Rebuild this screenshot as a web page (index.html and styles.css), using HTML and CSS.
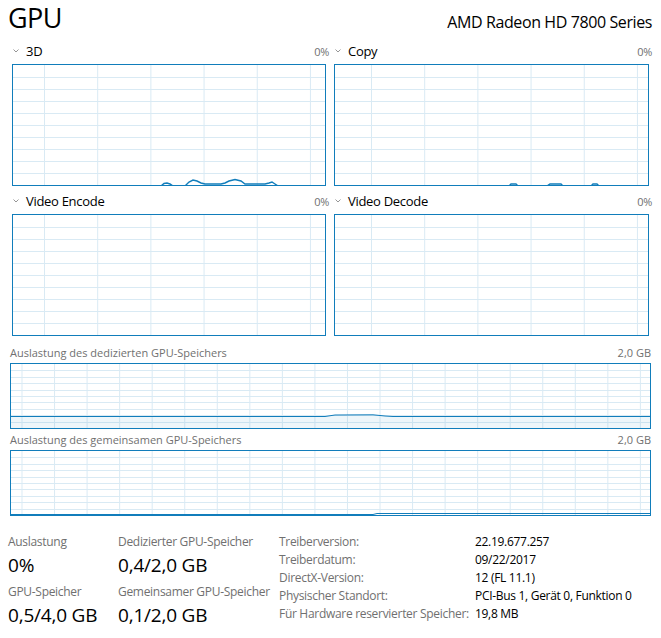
FILE: index.html
```html
<!DOCTYPE html>
<html lang="de">
<head>
<meta charset="utf-8">
<title>GPU</title>
<link rel="stylesheet" href="styles.css">
</head>
<body>
<header class="top">
  <h1 class="title">GPU</h1>
  <div class="device">AMD Radeon HD 7800 Series</div>
</header>

<section class="engines">
  <div class="engine">
    <div class="engine-head">
      <svg class="chev" viewBox="0 0 6 4"><polyline points="0.5,0.5 3,3 5.5,0.5"/></svg>
      <span class="engine-name">3D</span>
      <span class="pct">0%</span>
    </div>
    <div class="chart chart-left">
      <svg class="data" viewBox="0 0 312 120" preserveAspectRatio="none">
        <polyline points="0,121 148,121 151,118.5 154,118 157,119 160,121 172,121 176,117 180,115 184,116 188,118 192,119 200,119 208,119 212,118 216,116 222,114.5 228,116 232,119 240,119 252,119 256,118 259,117 262,119 265,121 312,121"/>
      </svg>
    </div>
  </div>
  <div class="engine">
    <div class="engine-head">
      <svg class="chev" viewBox="0 0 6 4"><polyline points="0.5,0.5 3,3 5.5,0.5"/></svg>
      <span class="engine-name">Copy</span>
      <span class="pct">0%</span>
    </div>
    <div class="chart chart-right">
      <svg class="data" viewBox="0 0 313 120" preserveAspectRatio="none">
        <polyline points="0,121 174,121 176,119 181,119 183,121 212,121 215,119 226,119 228,121 256,121 258,119 262,119 264,121 313,121"/>
      </svg>
    </div>
  </div>
  <div class="engine">
    <div class="engine-head">
      <svg class="chev" viewBox="0 0 6 4"><polyline points="0.5,0.5 3,3 5.5,0.5"/></svg>
      <span class="engine-name">Video Encode</span>
      <span class="pct">0%</span>
    </div>
    <div class="chart chart-left"></div>
  </div>
  <div class="engine">
    <div class="engine-head">
      <svg class="chev" viewBox="0 0 6 4"><polyline points="0.5,0.5 3,3 5.5,0.5"/></svg>
      <span class="engine-name">Video Decode</span>
      <span class="pct">0%</span>
    </div>
    <div class="chart chart-right"></div>
  </div>
</section>

<section class="mem">
  <div class="mem-block">
    <div class="mem-head"><span>Auslastung des dedizierten GPU-Speichers</span><span>2,0 GB</span></div>
    <div class="mchart">
      <svg class="data" viewBox="0 0 639 64" preserveAspectRatio="none">
        <polygon class="fill" points="0,52.5 314,52.5 324,51 362,50.8 374,52 382,52.5 639,52.5 639,64 0,64"/>
        <polyline class="thin" points="0,52.5 314,52.5 324,51 362,50.8 374,52 382,52.5 639,52.5"/>
      </svg>
    </div>
  </div>
  <div class="mem-block">
    <div class="mem-head"><span>Auslastung des gemeinsamen GPU-Speichers</span><span>2,0 GB</span></div>
    <div class="mchart">
      <svg class="data" viewBox="0 0 639 64" preserveAspectRatio="none">
        <polyline class="thin" points="0,63.5 362,63.5 366,62.5 639,62.5"/>
      </svg>
    </div>
  </div>
</section>

<section class="stats">
  <div class="stat-col stat-col-1">
    <div class="stat"><div class="stat-label">Auslastung</div><div class="stat-value">0%</div></div>
    <div class="stat"><div class="stat-label">GPU-Speicher</div><div class="stat-value">0,5/4,0 GB</div></div>
  </div>
  <div class="stat-col stat-col-2">
    <div class="stat"><div class="stat-label">Dedizierter GPU-Speicher</div><div class="stat-value">0,4/2,0 GB</div></div>
    <div class="stat"><div class="stat-label">Gemeinsamer GPU-Speicher</div><div class="stat-value">0,1/2,0 GB</div></div>
  </div>
  <dl class="info">
    <dt>Treiberversion:</dt><dd>22.19.677.257</dd>
    <dt>Treiberdatum:</dt><dd>09/22/2017</dd>
    <dt>DirectX-Version:</dt><dd>12 (FL 11.1)</dd>
    <dt>Physischer Standort:</dt><dd>PCI-Bus 1, Gerät 0, Funktion 0</dd>
    <dt>Für Hardware reservierter Speicher:</dt><dd>19,8 MB</dd>
  </dl>
</section>
</body>
</html>
```

FILE: styles.css
```css
html, body {
  margin: 0;
  padding: 0;
  background: #fff;
}

body {
  width: 661px;
  height: 638px;
  overflow: hidden;
  font-family: "Open Sans", "Noto Sans", sans-serif;
  color: #000;
}

.top {
  display: flex;
  justify-content: space-between;
  align-items: baseline;
  height: 41px;
  padding: 0 9px 0 8px;
  box-sizing: border-box;
}

.title {
  margin: 0;
  font-size: 27px;
  font-weight: 400;
  line-height: 36px;
  letter-spacing: -0.6px;
}

.device {
  font-size: 16px;
  line-height: 20px;
  letter-spacing: -0.4px;
}

.engines {
  display: grid;
  grid-template-columns: 314px 315px;
  column-gap: 8px;
  row-gap: 5px;
  margin-left: 12px;
}

.engine-head {
  display: flex;
  align-items: baseline;
  height: 20px;
  line-height: 20px;
  margin: 0 -3px 3px 0;
  font-size: 13px;
}

.chev {
  width: 6px;
  height: 4px;
  margin: 0 7px 0 1px;
  align-self: center;
  fill: none;
  stroke: #8a8a8a;
  stroke-width: 0.9;
}

.engine-name {
  letter-spacing: -0.3px;
}

.pct {
  margin-left: auto;
  font-size: 11px;
  color: #707070;
  letter-spacing: -0.3px;
}

.chart {
  height: 120px;
  border: 1px solid #117dbb;
  background-color: #fff;
  background-image:
    linear-gradient(to right, #d9eaf4 1px, transparent 1px),
    repeating-linear-gradient(to bottom, transparent 0, transparent 11px, #d9eaf4 11px, #d9eaf4 12px);
  background-repeat: repeat-x, no-repeat;
  background-size: 53.2px 100%, 100% 108px;
  overflow: hidden;
}

.chart-left {
  background-position: 31px 0, 0 1px;
}

.chart-right {
  background-position: 36px 0, 0 1px;
}

.data {
  display: block;
  width: 100%;
  height: 100%;
  overflow: hidden;
}

.data polyline {
  fill: none;
  stroke: #117dbb;
  stroke-width: 1.4;
}

.data polyline.thin {
  stroke-width: 1;
}

.data .fill {
  fill: rgba(17, 125, 187, 0.07);
  stroke: none;
}

.mem {
  margin: 8px 0 0 10px;
  width: 641px;
  display: flex;
  flex-direction: column;
  gap: 2px;
}

.mem-head {
  display: flex;
  justify-content: space-between;
  font-size: 11px;
  line-height: 18px;
  color: #707070;
  margin-bottom: 1px;
}

.mchart {
  height: 64px;
  border: 1px solid #117dbb;
  background-color: #fff;
  background-image:
    linear-gradient(to right, #d9eaf4 1px, transparent 1px),
    repeating-linear-gradient(to bottom, transparent 0, transparent 5.5px, #d9eaf4 5.5px, #d9eaf4 6.4px);
  background-repeat: repeat-x, no-repeat;
  background-size: 32.55px 100%, 100% 58px;
  background-position: 10.5px 0, 0 1px;
  overflow: hidden;
}

.stats {
  display: flex;
  align-items: flex-start;
  margin: 16px 0 0 8px;
}

.stat-col {
  padding-top: 2px;
}

.stat-col-1 {
  width: 110px;
}

.stat-col-2 {
  width: 161px;
}

.stat + .stat {
  margin-top: 4px;
}

.stat-label {
  font-size: 12px;
  line-height: 16px;
  color: #707070;
  letter-spacing: -0.3px;
}

.stat-value {
  font-size: 19px;
  line-height: 30px;
  letter-spacing: -0.2px;
}

.info {
  display: grid;
  grid-template-columns: 196px auto;
  align-content: start;
  margin: 0;
  padding-top: 1px;
  font-size: 12px;
  line-height: 18px;
  letter-spacing: -0.3px;
}

.info dt {
  color: #707070;
}

.info dd {
  margin: 0;
  color: #000;
}
```
